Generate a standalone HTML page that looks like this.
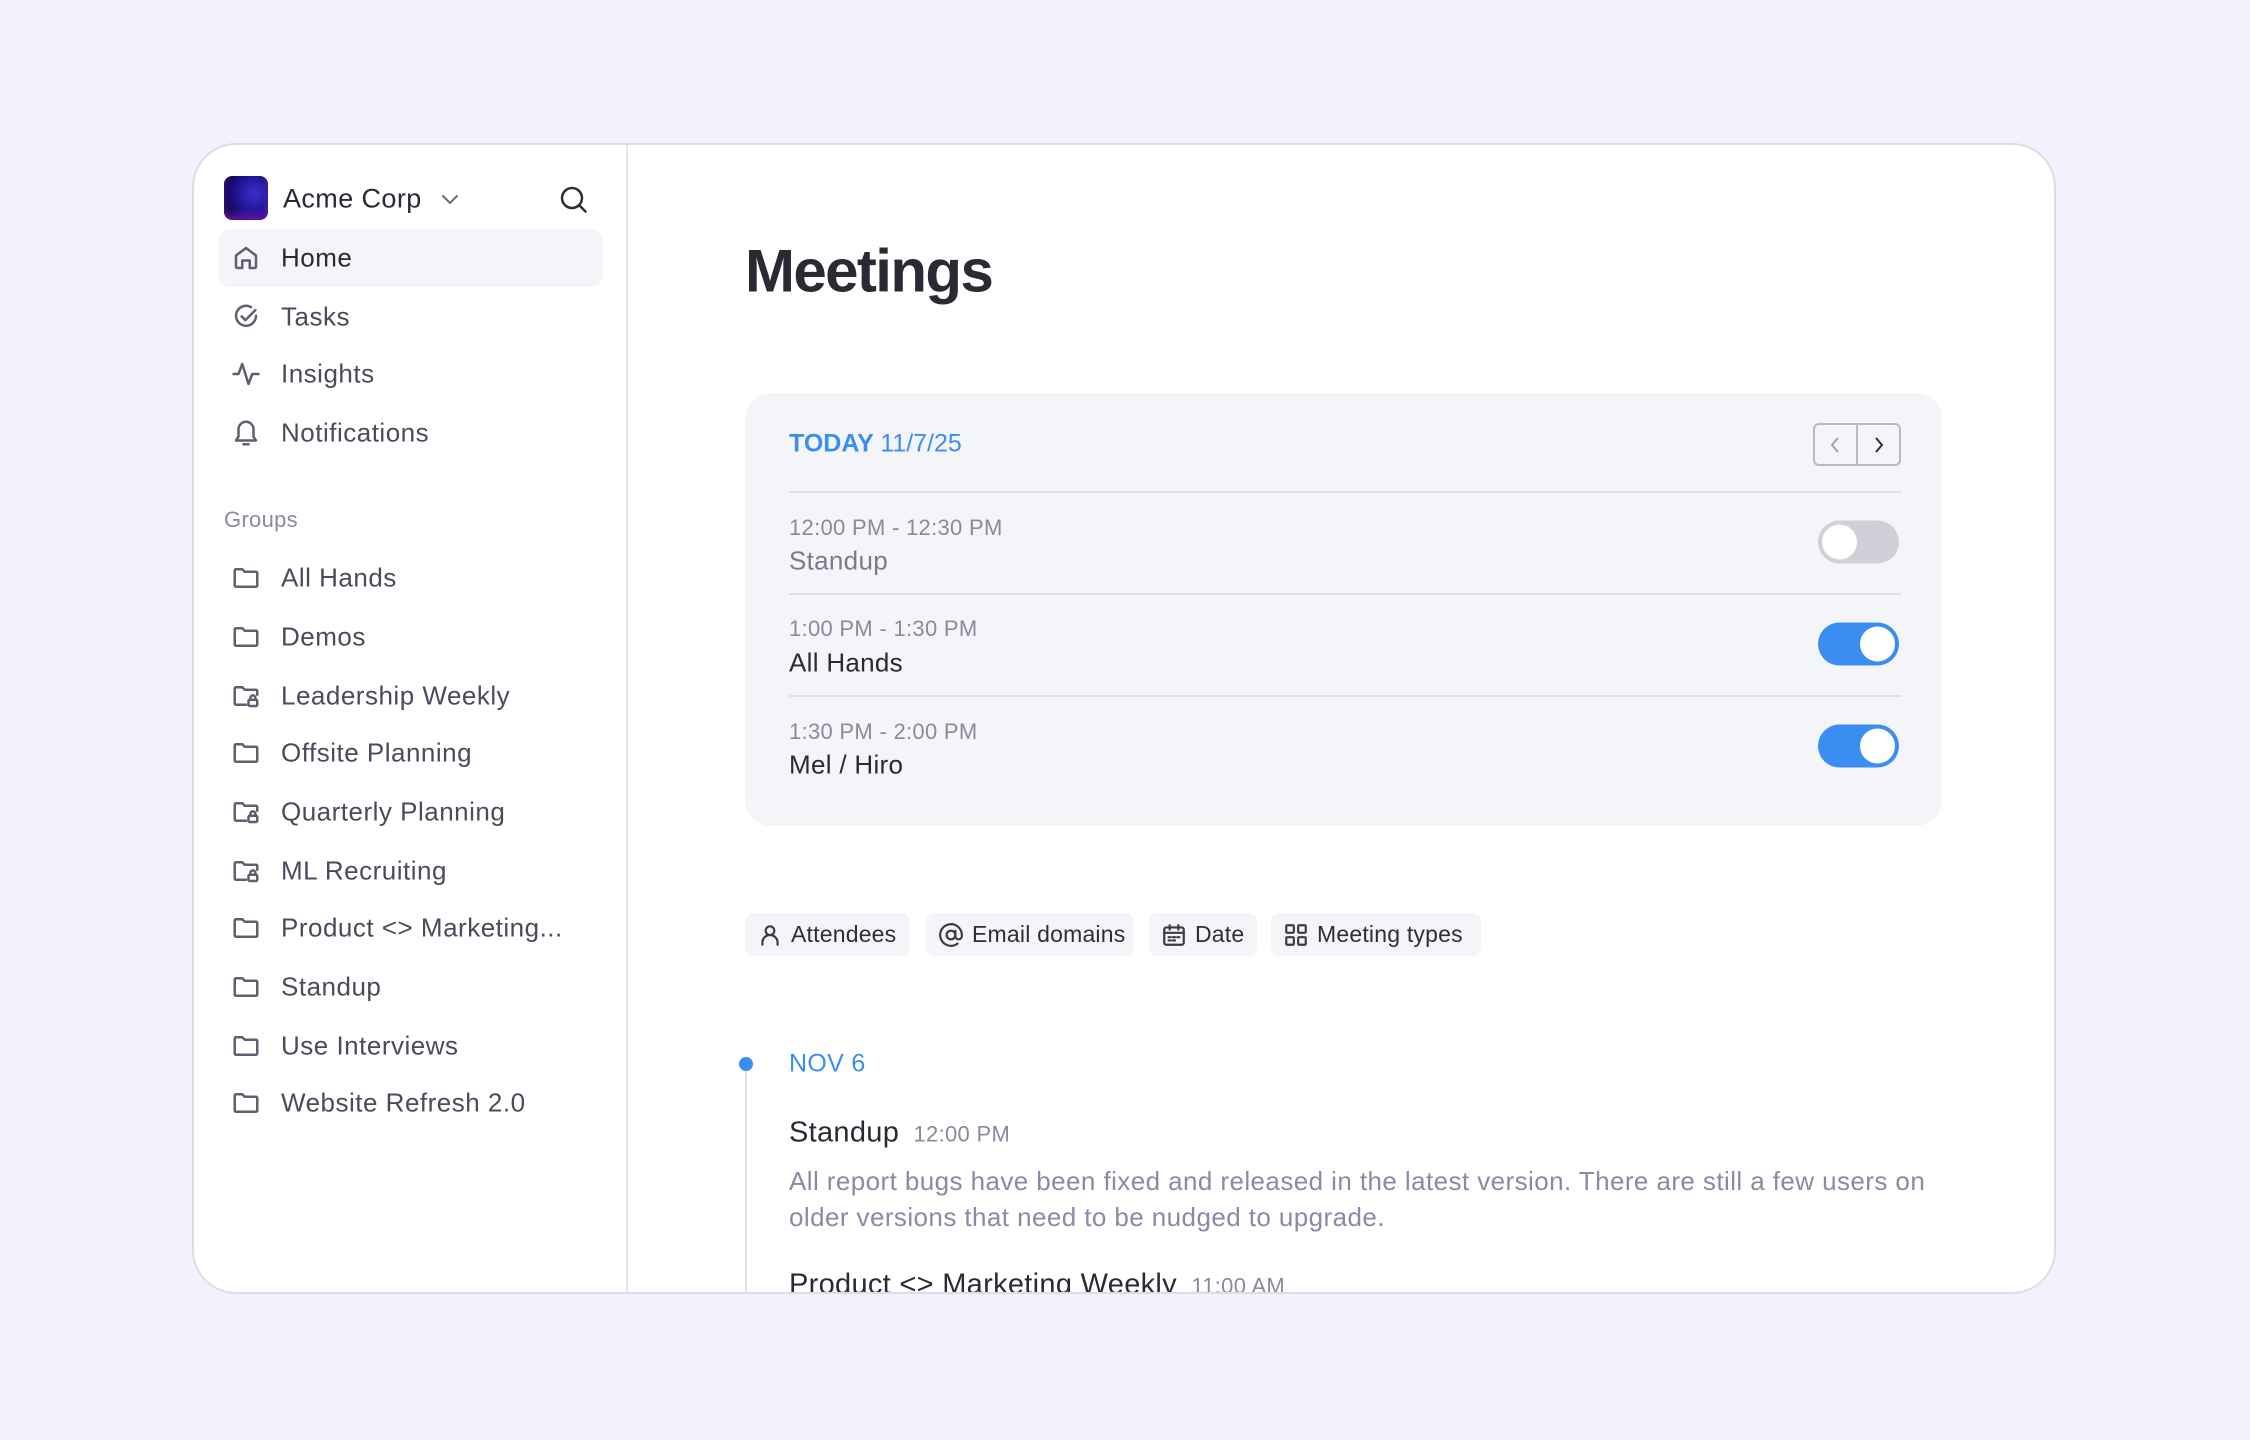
<!DOCTYPE html>
<html><head><meta charset="utf-8"><style>
*{box-sizing:border-box;margin:0;padding:0}
body{width:2250px;height:1440px;background:#f2f1fd;font-family:"Liberation Sans",sans-serif;position:relative;overflow:hidden}
.card{position:absolute;left:192px;top:143px;width:1864px;height:1151px;background:#fff;border:2px solid #dcdce6;border-radius:44px;overflow:hidden}
.side{position:absolute;left:0;top:0;width:434px;height:100%;border-right:2px solid #e4e4ec}
.abs{position:absolute}
.nav{position:absolute;left:87px;font-size:26px;color:#4b4b5c;transform:translateY(-50%);letter-spacing:0.5px}
.ic{position:absolute;left:37px;width:30px;height:30px;transform:translateY(-50%)}
.ic svg{width:30px;height:30px;fill:none;stroke:#5f5f70;stroke-width:2;stroke-linecap:round;stroke-linejoin:round}
.t{position:absolute;transform:translateY(-50%);white-space:nowrap}
.chip{position:absolute;top:768px;height:43px;background:#f4f5f8;border-radius:8px;font-size:23px;color:#2e2e38;display:flex;align-items:center;padding-left:12px;gap:8px;letter-spacing:0.2px}
.chip svg{width:26px;height:26px;fill:none;stroke:#3a3a46;stroke-width:2;stroke-linecap:round;stroke-linejoin:round}
.tog{position:absolute;left:1624px;width:81px;height:43px;border-radius:22px;transform:translateY(-50%)}
.tog::after{content:"";position:absolute;top:4px;width:35px;height:35px;border-radius:50%;background:#fff}
.on{background:#3a8ef2}.on::after{right:4px}
.off{background:#cfd0da}.off::after{left:4px}
.m{letter-spacing:0.3px}
</style></head><body>
<div class="card">
<div class="side">
 <div class="abs" style="left:30px;top:31px;width:44px;height:44px;border-radius:8px;background:radial-gradient(circle at 70% 40%,#3a2fd0,#1a0f80 55%,#0b0540 80%),#1a0f80;box-shadow:inset 0 -6px 8px rgba(140,30,200,.6)"></div>
 <div class="t" style="left:89px;top:54px;font-size:27px;color:#2a2a35;letter-spacing:0.4px">Acme Corp</div>
 <svg class="abs" style="left:246px;top:45px" width="20" height="18" viewBox="0 0 20 18"><path d="M3 6l7 7 7-7" fill="none" stroke="#6a6a7a" stroke-width="2" stroke-linecap="round"/></svg>
 <svg class="abs" style="left:365px;top:40px" width="30" height="30" viewBox="0 0 30 30"><circle cx="13" cy="13" r="10" fill="none" stroke="#2e2e38" stroke-width="2.5"/><path d="M20.5 20.5l6 6" stroke="#2e2e38" stroke-width="2.5" stroke-linecap="round"/></svg>
 <div class="abs" style="left:24px;top:84px;width:385px;height:58px;border-radius:12px;background:#f4f5f8"></div>
 <div class="ic" style="top:113px"><svg viewBox="0 0 24 24"><path d="M4 10l8-6 8 6v9a1 1 0 0 1-1 1h-4v-6h-6v6H5a1 1 0 0 1-1-1z"/></svg></div>
 <div class="nav" style="top:113px;color:#2a2a35">Home</div>
 <div class="ic" style="top:172px"><svg viewBox="0 0 24 24"><path d="M20 11a8 8 0 1 1-4-6.9"/><path d="M8.5 11.5l3 3 8-8"/></svg></div>
 <div class="nav" style="top:172px">Tasks</div>
 <div class="ic" style="top:229px"><svg viewBox="0 0 24 24"><path d="M2 12h4l3-8 5 16 3-8h5"/></svg></div>
 <div class="nav" style="top:229px">Insights</div>
 <div class="ic" style="top:288px"><svg viewBox="0 0 24 24"><path d="M6 9a6 6 0 0 1 12 0v6l2 3H4l2-3z"/><path d="M10 21h4"/></svg></div>
 <div class="nav" style="top:288px">Notifications</div>
 <div class="t" style="left:30px;top:375px;font-size:22px;color:#8a8a9c;letter-spacing:0.3px">Groups</div>
 <div class="ic" style="top:433px"><svg viewBox="0 0 24 24"><path d="M3 6a1 1 0 0 1 1-1h5l2 2h9a1 1 0 0 1 1 1v10a1 1 0 0 1-1 1H4a1 1 0 0 1-1-1z"/></svg></div><div class="nav" style="top:433px">All Hands</div>
 <div class="ic" style="top:492px"><svg viewBox="0 0 24 24"><path d="M3 6a1 1 0 0 1 1-1h5l2 2h9a1 1 0 0 1 1 1v10a1 1 0 0 1-1 1H4a1 1 0 0 1-1-1z"/></svg></div><div class="nav" style="top:492px">Demos</div>
 <div class="ic" style="top:551px"><svg viewBox="0 0 24 24"><path d="M12 19H4a1 1 0 0 1-1-1V6a1 1 0 0 1 1-1h5l2 2h9a1 1 0 0 1 1 1v3"/><rect x="14" y="15" width="7" height="5" rx="1"/><path d="M15.5 15v-1.5a2 2 0 0 1 4 0V15"/></svg></div><div class="nav" style="top:551px">Leadership Weekly</div>
 <div class="ic" style="top:608px"><svg viewBox="0 0 24 24"><path d="M3 6a1 1 0 0 1 1-1h5l2 2h9a1 1 0 0 1 1 1v10a1 1 0 0 1-1 1H4a1 1 0 0 1-1-1z"/></svg></div><div class="nav" style="top:608px">Offsite Planning</div>
 <div class="ic" style="top:667px"><svg viewBox="0 0 24 24"><path d="M12 19H4a1 1 0 0 1-1-1V6a1 1 0 0 1 1-1h5l2 2h9a1 1 0 0 1 1 1v3"/><rect x="14" y="15" width="7" height="5" rx="1"/><path d="M15.5 15v-1.5a2 2 0 0 1 4 0V15"/></svg></div><div class="nav" style="top:667px">Quarterly Planning</div>
 <div class="ic" style="top:726px"><svg viewBox="0 0 24 24"><path d="M12 19H4a1 1 0 0 1-1-1V6a1 1 0 0 1 1-1h5l2 2h9a1 1 0 0 1 1 1v3"/><rect x="14" y="15" width="7" height="5" rx="1"/><path d="M15.5 15v-1.5a2 2 0 0 1 4 0V15"/></svg></div><div class="nav" style="top:726px">ML Recruiting</div>
 <div class="ic" style="top:783px"><svg viewBox="0 0 24 24"><path d="M3 6a1 1 0 0 1 1-1h5l2 2h9a1 1 0 0 1 1 1v10a1 1 0 0 1-1 1H4a1 1 0 0 1-1-1z"/></svg></div><div class="nav" style="top:783px">Product &lt;&gt; Marketing...</div>
 <div class="ic" style="top:842px"><svg viewBox="0 0 24 24"><path d="M3 6a1 1 0 0 1 1-1h5l2 2h9a1 1 0 0 1 1 1v10a1 1 0 0 1-1 1H4a1 1 0 0 1-1-1z"/></svg></div><div class="nav" style="top:842px">Standup</div>
 <div class="ic" style="top:901px"><svg viewBox="0 0 24 24"><path d="M3 6a1 1 0 0 1 1-1h5l2 2h9a1 1 0 0 1 1 1v10a1 1 0 0 1-1 1H4a1 1 0 0 1-1-1z"/></svg></div><div class="nav" style="top:901px">Use Interviews</div>
 <div class="ic" style="top:958px"><svg viewBox="0 0 24 24"><path d="M3 6a1 1 0 0 1 1-1h5l2 2h9a1 1 0 0 1 1 1v10a1 1 0 0 1-1 1H4a1 1 0 0 1-1-1z"/></svg></div><div class="nav" style="top:958px">Website Refresh 2.0</div>
</div>

<div class="t" style="left:551px;top:126px;font-size:60px;font-weight:bold;color:#2a2a35;letter-spacing:-1.6px">Meetings</div>
<div class="abs" style="left:551px;top:248px;width:1197px;height:433px;background:#f4f5f8;border-radius:26px"></div>
<div class="t" style="left:595px;top:299px;font-size:25px;font-weight:bold;color:#3a8ef2">TODAY <span style="font-weight:normal">11/7/25</span></div>
<div class="abs" style="left:1619px;top:278px;width:88px;height:43px;border:2px solid #b8b8c6;border-radius:6px"></div>
<div class="abs" style="left:1662px;top:278px;width:2px;height:43px;background:#b8b8c6"></div>
<svg class="abs" style="left:1632px;top:289px" width="20" height="22" viewBox="0 0 20 22"><path d="M12 4l-6 7 6 7" fill="none" stroke="#a0a0b0" stroke-width="2"/></svg>
<svg class="abs" style="left:1674px;top:289px" width="20" height="22" viewBox="0 0 20 22"><path d="M8 4l6 7-6 7" fill="none" stroke="#2e2e38" stroke-width="2"/></svg>
<div class="abs" style="left:595px;top:346px;width:1112px;height:2px;background:#e0e1e8"></div>
<div class="t m" style="left:595px;top:383px;font-size:22px;color:#8a8a9c">12:00 PM - 12:30 PM</div>
<div class="t m" style="left:595px;top:416px;font-size:26px;color:#7a7a8c">Standup</div>
<div class="tog off" style="top:397px"></div>
<div class="abs" style="left:595px;top:448px;width:1112px;height:2px;background:#e0e1e8"></div>
<div class="t m" style="left:595px;top:484px;font-size:22px;color:#8a8a9c">1:00 PM - 1:30 PM</div>
<div class="t m" style="left:595px;top:518px;font-size:26px;color:#2a2a35">All Hands</div>
<div class="tog on" style="top:499px"></div>
<div class="abs" style="left:595px;top:550px;width:1112px;height:2px;background:#e0e1e8"></div>
<div class="t m" style="left:595px;top:587px;font-size:22px;color:#8a8a9c">1:30 PM - 2:00 PM</div>
<div class="t m" style="left:595px;top:620px;font-size:26px;color:#2a2a35">Mel / Hiro</div>
<div class="tog on" style="top:601px"></div>

<div class="chip" style="left:551px;width:165px"><svg viewBox="0 0 24 24"><circle cx="12" cy="8" r="4"/><path d="M5 21v-2a7 7 0 0 1 14 0v2"/></svg>Attendees</div>
<div class="chip" style="left:732px;width:208px"><svg viewBox="0 0 24 24"><circle cx="12" cy="12" r="4"/><path d="M16 8v5a3 3 0 0 0 6 0v-1a10 10 0 1 0-4 8"/></svg>Email domains</div>
<div class="chip" style="left:955px;width:108px"><svg viewBox="0 0 24 24"><rect x="3" y="5" width="18" height="16" rx="2"/><path d="M3 10h18M8 3v4M16 3v4M7 14h2M11 14h2M15 14h2M7 17h2M11 17h2"/></svg>Date</div>
<div class="chip" style="left:1077px;width:210px"><svg viewBox="0 0 24 24"><rect x="3" y="3" width="7" height="7" rx="1"/><rect x="14" y="3" width="7" height="7" rx="1"/><rect x="3" y="14" width="7" height="7" rx="1"/><rect x="14" y="14" width="7" height="7" rx="1"/></svg>Meeting types</div>

<div class="abs" style="left:551px;top:919px;width:2px;height:240px;background:#e0e1e8"></div>
<div class="abs" style="left:545px;top:912px;width:14px;height:14px;border-radius:50%;background:#3a8ef2"></div>
<div class="t m" style="left:595px;top:919px;font-size:25px;color:#3a8ef2">NOV 6</div>
<div class="t m" style="left:595px;top:988px;font-size:29px;color:#2a2a35">Standup <span style="font-size:22px;color:#8a8a9c;margin-left:6px">12:00 PM</span></div>
<div class="abs" style="left:595px;top:1018px;width:1180px;font-size:26px;line-height:36px;color:#8a8aa5;letter-spacing:0.42px">All report bugs have been fixed and released in the latest version. There are still a few users on older versions that need to be nudged to upgrade.</div>
<div class="t m" style="left:595px;top:1140px;font-size:29px;color:#2a2a35">Product &lt;&gt; Marketing Weekly <span style="font-size:22px;color:#8a8a9c;margin-left:6px">11:00 AM</span></div>
</div>
</body></html>
